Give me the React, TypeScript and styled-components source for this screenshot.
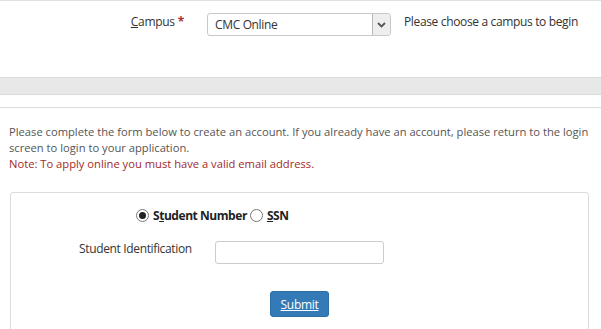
import React, { useState } from 'react';
import styled, { createGlobalStyle } from 'styled-components';

const GlobalStyle = createGlobalStyle`
  html, body {
    margin: 0;
    padding: 0;
    background: #fff;
  }
  body {
    font-family: 'Open Sans', 'Liberation Sans', sans-serif;
    color: #333;
  }
`;

const Page = styled.div`
  width: 601px;
  height: 329px;
  overflow: hidden;
  border-top: 1px solid #e0e0e0;
  box-sizing: border-box;
`;

const CampusRow = styled.div`
  display: flex;
  align-items: flex-start;
  padding-top: 12px;
  height: 76px;
  box-sizing: border-box;
`;

const FieldLabel = styled.label`
  width: 184px;
  text-align: right;
  font-size: 12px;
  line-height: 16px;
  letter-spacing: -0.3px;
  padding-top: 1px;
  color: #333;
`;

const AccessKey = styled.span`
  text-decoration: underline;
`;

const Required = styled.span`
  color: #a33;
  font-weight: 700;
  margin-left: 3px;
`;

const SelectBox = styled.div`
  display: flex;
  width: 184px;
  height: 23px;
  margin-left: 23px;
  box-sizing: border-box;
  border: 1px solid #c8c8c8;
  border-radius: 3px;
  background: #fff;
  overflow: hidden;
`;

const SelectValue = styled.div`
  flex: 1;
  font-size: 12px;
  line-height: 21px;
  letter-spacing: -0.35px;
  padding-left: 7px;
  color: #333;
`;

const SelectArrow = styled.div`
  width: 17px;
  display: flex;
  align-items: center;
  justify-content: center;
  background: #eee;
  border-left: 1px solid #b8b8b8;
`;

const HelpText = styled.div`
  margin-left: 13px;
  font-size: 12px;
  line-height: 16px;
  letter-spacing: -0.35px;
  padding-top: 1px;
`;

const Band = styled.div`
  height: 16px;
  background: #e8e8e8;
  border-top: 1px solid #dcdcdc;
  border-bottom: 1px solid #dcdcdc;
`;

const Divider = styled.div`
  margin-top: 12px;
  border-top: 1px solid #dcdcdc;
`;

const Intro = styled.div`
  padding: 16px 6px 0 9px;
  font-size: 11.2px;
  line-height: 16px;
  color: #555;
`;

const Note = styled.div`
  color: #a32a2a;
`;

const Card = styled.div`
  margin: 20px 12px 0 10px;
  border: 1px solid #dcdcdc;
  border-radius: 3px;
  height: 160px;
  padding-top: 14px;
`;

const RadioRow = styled.div`
  display: flex;
  align-items: center;
  padding-left: 125px;
  font-size: 12px;
  line-height: 17px;
  font-weight: 700;
  letter-spacing: -0.45px;
  color: #222;
`;

const Radio = styled.span<{ checked?: boolean }>`
  width: 11px;
  height: 11px;
  border: 1px solid #777;
  border-radius: 50%;
  display: inline-flex;
  align-items: center;
  justify-content: center;
  margin-right: 4px;
  margin-left: ${(p) => (p.checked ? '0' : '3px')};
  background: #fff;
  &::after {
    content: '';
    width: 7px;
    height: 7px;
    border-radius: 50%;
    background: ${(p) => (p.checked ? '#222' : 'transparent')};
  }
`;

const IdRow = styled.div`
  display: flex;
  align-items: flex-start;
  margin-top: 17px;
`;

const IdLabel = styled.div`
  width: 181px;
  padding-left: 68px;
  box-sizing: border-box;
  font-size: 12px;
  line-height: 16px;
  letter-spacing: -0.35px;
  white-space: nowrap;
  color: #333;
`;

const TextInput = styled.input`
  width: 169px;
  height: 23px;
  margin: 0 0 0 23px;
  box-sizing: border-box;
  border: 1px solid #ccc;
  border-radius: 3px;
`;

const ButtonRow = styled.div`
  display: flex;
  padding-left: 259px;
  margin-top: 27px;
`;

const SubmitButton = styled.button`
  width: 59px;
  height: 26px;
  background: #337ab7;
  border: 1px solid #2e6da4;
  border-radius: 3px;
  color: #fff;
  font-family: 'Open Sans', 'Liberation Sans', sans-serif;
  font-size: 12px;
  letter-spacing: -0.3px;
  text-decoration: underline;
  padding: 0;
`;

export default function App() {
  const [mode, setMode] = useState<'number' | 'ssn'>('number');
  return (
    <Page>
      <GlobalStyle />
      <CampusRow>
        <FieldLabel>
          <AccessKey>C</AccessKey>ampus<Required>*</Required>
        </FieldLabel>
        <SelectBox>
          <SelectValue>CMC Online</SelectValue>
          <SelectArrow>
            <svg width="9" height="6" viewBox="0 0 9 6">
              <path d="M1 1 L4.5 4.5 L8 1" stroke="#555" strokeWidth="1.8" fill="none" />
            </svg>
          </SelectArrow>
        </SelectBox>
        <HelpText>Please choose a campus to begin</HelpText>
      </CampusRow>
      <Band />
      <Divider />
      <Intro>
        Please complete the form below to create an account. If you already have an account, please return to the login
        screen to login to your application.
        <Note>Note: To apply online you must have a valid email address.</Note>
      </Intro>
      <Card>
        <RadioRow>
          <Radio checked={mode === 'number'} onClick={() => setMode('number')} />
          S<AccessKey>t</AccessKey>udent Number
          <Radio checked={mode === 'ssn'} onClick={() => setMode('ssn')} />
          <AccessKey>S</AccessKey>SN
        </RadioRow>
        <IdRow>
          <IdLabel>Student Identification</IdLabel>
          <TextInput />
        </IdRow>
        <ButtonRow>
          <SubmitButton>Submit</SubmitButton>
        </ButtonRow>
      </Card>
    </Page>
  );
}
